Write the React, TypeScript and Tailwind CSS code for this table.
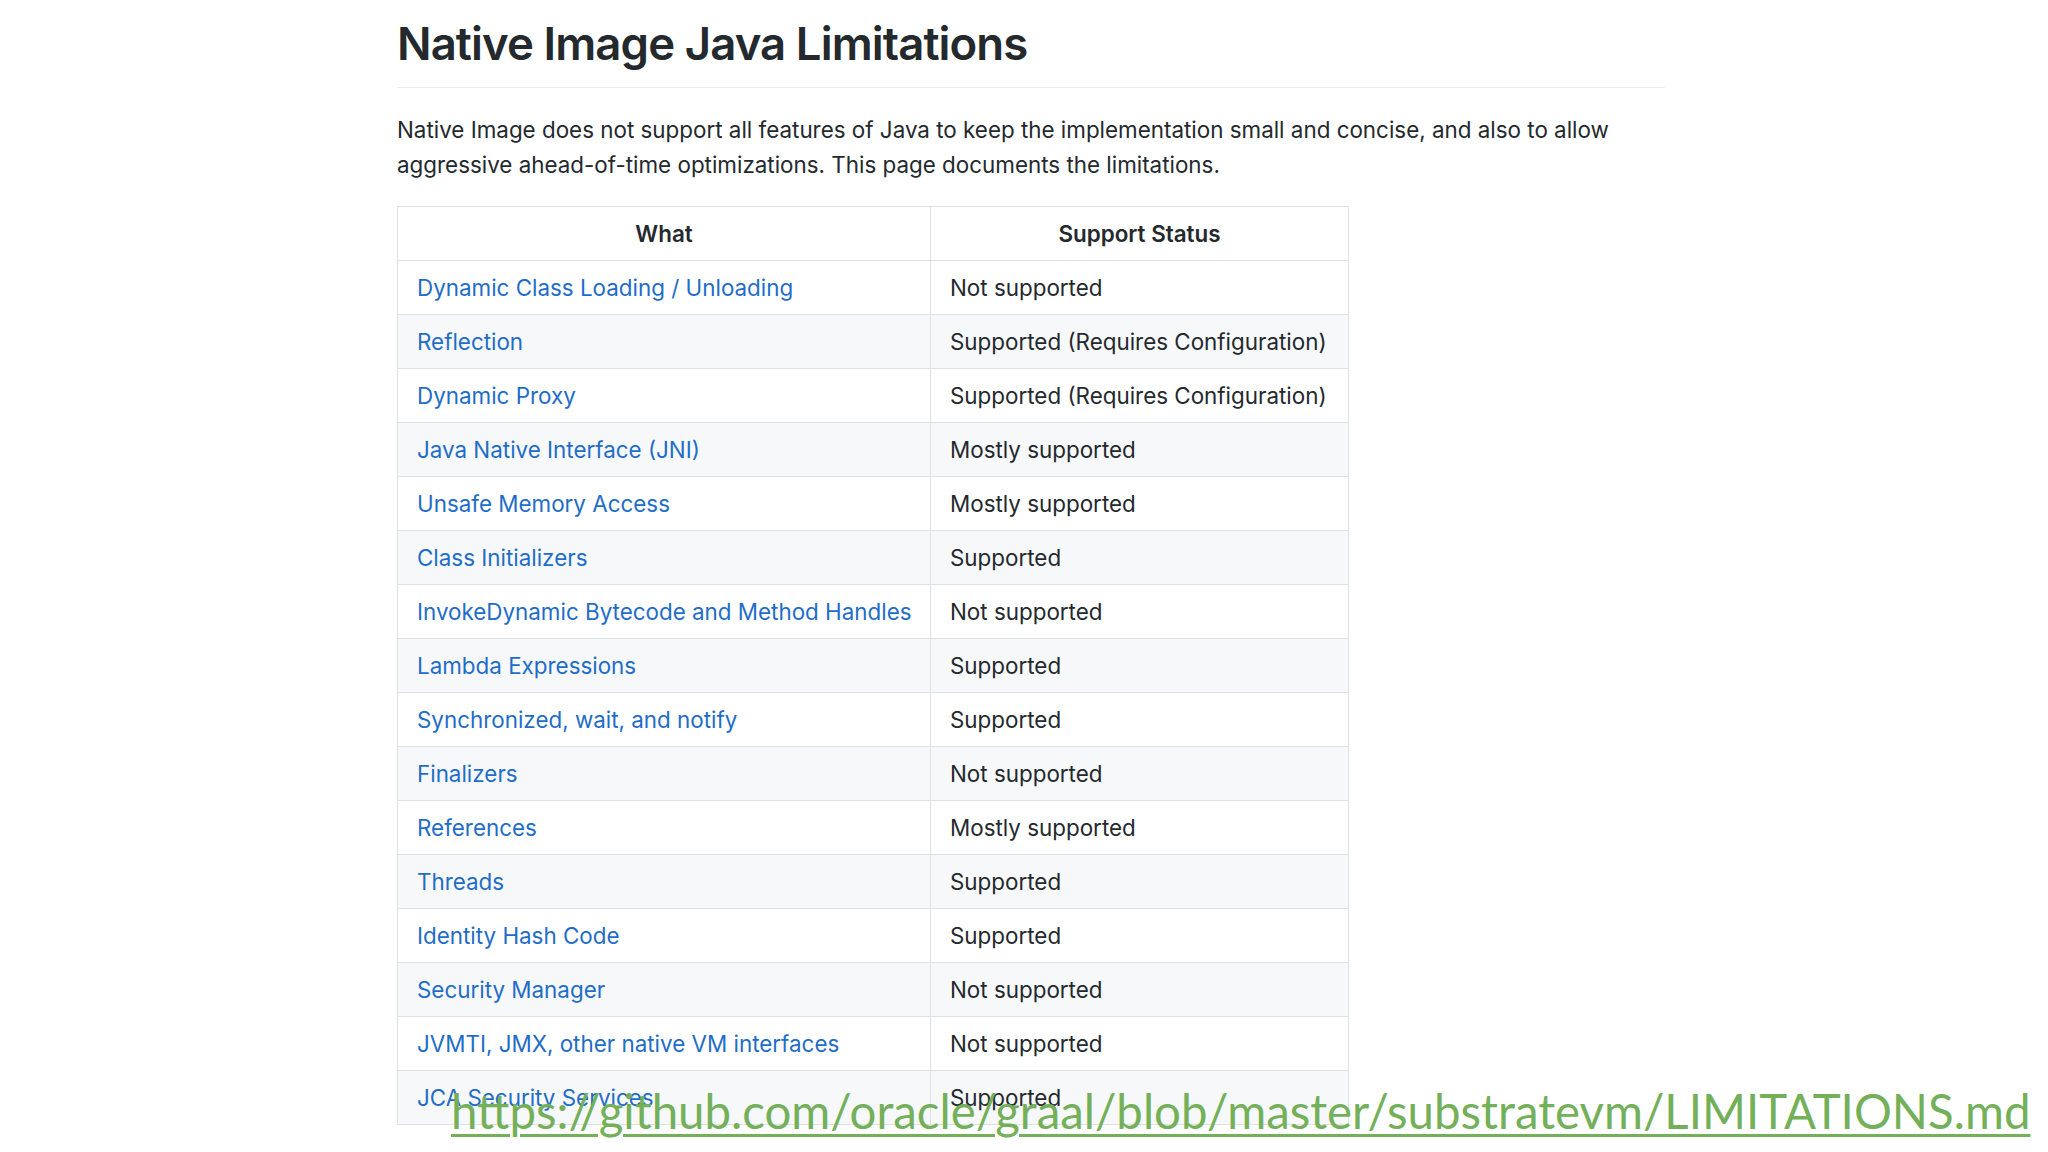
import React from 'react';

const rows: [string, string][] = [
  ['Dynamic Class Loading / Unloading', 'Not supported'],
  ['Reflection', 'Supported (Requires Configuration)'],
  ['Dynamic Proxy', 'Supported (Requires Configuration)'],
  ['Java Native Interface (JNI)', 'Mostly supported'],
  ['Unsafe Memory Access', 'Mostly supported'],
  ['Class Initializers', 'Supported'],
  ['InvokeDynamic Bytecode and Method Handles', 'Not supported'],
  ['Lambda Expressions', 'Supported'],
  ['Synchronized, wait, and notify', 'Supported'],
  ['Finalizers', 'Not supported'],
  ['References', 'Mostly supported'],
  ['Threads', 'Supported'],
  ['Identity Hash Code', 'Supported'],
  ['Security Manager', 'Not supported'],
  ['JVMTI, JMX, other native VM interfaces', 'Not supported'],
  ['JCA Security Services', 'Supported'],
];

const App = () => {
  return (
    <div className="relative w-[2048px] h-[1152px] overflow-hidden bg-white font-['Inter',sans-serif] text-[#24292e]">
      <div className="w-[1268px] ml-[397px] pt-[14px]">
        {/* Title */}
        <h1 className="text-[45.5px] leading-[59px] font-semibold tracking-[-0.9px] pb-[14px] border-b border-[#eaecef]">
          Native Image Java Limitations
        </h1>

        <p className="mt-[25px] text-[22.4px] leading-[34.5px]">
          Native Image does not support all features of Java to keep the implementation small and concise, and also to allow
          aggressive ahead-of-time optimizations. This page documents the limitations.
        </p>

        {/* Limitations table */}
        <table className="mt-[24px] w-[951px] table-fixed border-collapse text-[22.4px]">
          <colgroup>
            <col className="w-[533px]" />
            <col className="w-[418px]" />
          </colgroup>
          <thead>
            <tr className="bg-white">
              <th className="border border-[#dfe2e5] px-[19px] py-[9px] leading-[35px] font-semibold text-center">What</th>
              <th className="border border-[#dfe2e5] px-[19px] py-[9px] leading-[35px] font-semibold text-center">Support Status</th>
            </tr>
          </thead>
          <tbody>
            {rows.map(([what, status], i) => (
              <tr key={what} className={i % 2 === 1 ? 'bg-[#f6f8fa]' : 'bg-white'}>
                <td className="border border-[#dfe2e5] px-[19px] py-[9px] leading-[35px] whitespace-nowrap">
                  <a className="text-[#1f6dc8]">{what}</a>
                </td>
                <td className="border border-[#dfe2e5] px-[19px] py-[9px] leading-[35px] whitespace-nowrap">{status}</td>
              </tr>
            ))}
          </tbody>
        </table>
      </div>

      {/* Slide hyperlink over the table */}
      <a className="absolute left-[451px] top-[1083px] font-['Lato',sans-serif] text-[47.4px] leading-[56px] text-[#74b05a] underline decoration-[3px] underline-offset-[5px] whitespace-nowrap">
        https://github.com/oracle/graal/blob/master/substratevm/LIMITATIONS.md
      </a>
    </div>
  );
};

export default App;
